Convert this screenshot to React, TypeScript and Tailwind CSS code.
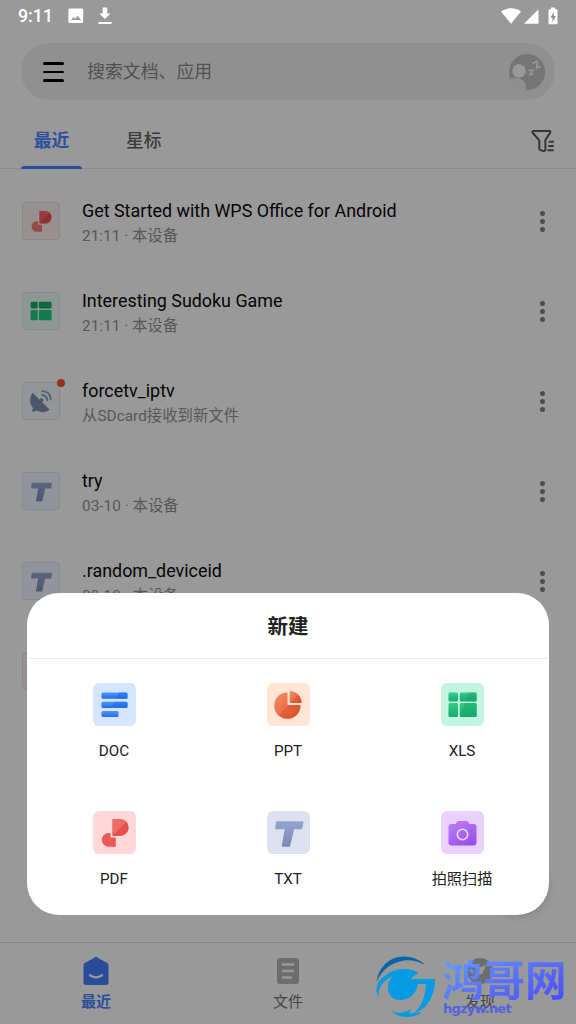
import type { ReactNode } from 'react';

type FileKind = 'pdf' | 'xls' | 'tv' | 'txt';

interface RecentFile {
  name: string;
  meta: string;
  kind: FileKind;
  unread?: boolean;
}

const files: RecentFile[] = [
  { name: 'Get Started with WPS Office for Android', meta: '21:11 · 本设备', kind: 'pdf' },
  { name: 'Interesting Sudoku Game', meta: '21:11 · 本设备', kind: 'xls' },
  { name: 'forcetv_iptv', meta: '从SDcard接收到新文件', kind: 'tv', unread: true },
  { name: 'try', meta: '03-10 · 本设备', kind: 'txt' },
  { name: '.random_deviceid', meta: '03-10 · 本设备', kind: 'txt' },
  { name: '', meta: '', kind: 'pdf' },
];

const tileStyles: Record<FileKind, string> = {
  pdf: 'bg-[#979090] border-[#8e8585]',
  xls: 'bg-[#8f9794] border-[#869089]',
  tv: 'bg-[#949596] border-[#888a8c]',
  txt: 'bg-[#91959b] border-[#858a94]',
};

function PdfMark({ from, to, light }: { from: string; to: string; light: string }) {
  return (
    <svg viewBox="0 0 43 43" className="size-full">
      <defs>
        <linearGradient id={`pdf${from}`} x1="0" y1="0" x2="1" y2="1">
          <stop offset="0.48" stopColor={from} />
          <stop offset="0.52" stopColor={to} />
        </linearGradient>
      </defs>
      <path d="M20 8h7.200a8.500 8.500 0 0 1 0 17H20a.8.8 0 0 1-.8-.8V8.800A.8.8 0 0 1 20 8z" fill={`url(#pdf${from})`} />
      <path d="M17.600 22v4.600h5.200v8.400a.8.8 0 0 1-.8.800h-6.200a6.900 6.900 0 0 1-6.900-6.900c0-4 3-7 6.900-7z" fill={light} />
    </svg>
  );
}

function XlsMark({ top, bottom }: { top: string; bottom: string }) {
  return (
    <svg viewBox="0 0 43 43" className="size-full">
      <rect x="7.500" y="9" width="9.500" height="9" rx="1.500" fill={top} />
      <rect x="18.700" y="9" width="17" height="9" rx="1.500" fill={top} />
      <rect x="7.500" y="20" width="9.500" height="14" rx="1.500" fill={bottom} />
      <rect x="18.700" y="20" width="17" height="14" rx="1.500" fill={bottom} />
    </svg>
  );
}

function TxtMark({ from, to }: { from: string; to: string }) {
  return (
    <svg viewBox="0 0 43 43" className="size-full">
      <defs>
        <linearGradient id={`txt${from}`} gradientUnits="userSpaceOnUse" x1="0" y1="10" x2="0" y2="36">
          <stop offset="0" stopColor={from} />
          <stop offset="1" stopColor={to} />
        </linearGradient>
      </defs>
      <polygon
        points="10,11.200 35.500,11.200 34.300,17.300 26.300,17.300 22.300,34.800 15.600,34.800 18.800,17.300 9,17.300"
        fill={`url(#txt${from})`}
        stroke={`url(#txt${from})`}
        strokeWidth="1.800"
        strokeLinejoin="round"
      />
    </svg>
  );
}

function DishMark() {
  return (
    <svg viewBox="4 4 31 31" className="size-full" fill="#4b566d">
      <path d="M11.500 11.500 28 28c-3.500 2.800-8.500 3-12.200 1l-5 .8.900-3.500C8.300 22 8.200 15.500 11.500 11.500z" />
      <circle cx="20" cy="18.700" r="1.800" />
      <g fill="none" stroke="#565f73" strokeWidth="1.800" strokeLinecap="round">
        <path d="M20.700 13.700c3 .3 4.500 2 4.800 5" />
        <path d="M20.700 10c5 .2 8 3.300 8.200 8.200" />
      </g>
    </svg>
  );
}

function FileMark({ kind }: { kind: FileKind }) {
  if (kind === 'pdf') return <PdfMark from="#963c3a" to="#902f2e" light="#984845" />;
  if (kind === 'xls') return <XlsMark top="#0b6941" bottom="#13794e" />;
  if (kind === 'tv') return <DishMark />;
  return <TxtMark from="#5b6580" to="#4c566d" />;
}

function StatusBar() {
  return (
    <div className="flex h-8 items-center pl-[18px] pr-[18px] text-white">
      <span className="w-[49px] text-[17.800px] leading-8 font-medium">9:11</span>
      <svg viewBox="0 0 16 16" className="ml-px h-4 w-4">
        <path
          fill="currentColor"
          fillRule="evenodd"
          d="M2 .5h11.600c1 0 1.600.700 1.600 1.600v11.300c0 1-.7 1.600-1.600 1.600H2c-1 0-1.600-.7-1.600-1.600V2.100C.4 1.200 1 .5 2 .5zM3 12h10L9.700 7.700l-2.500 3.200-1.700-2z"
        />
      </svg>
      <svg viewBox="0 0 14 18" className="ml-[14px] -mt-px h-[18px] w-[14px]" fill="currentColor">
        <path d="M4.600 0.500h4.600v6h3.300L6.900 12 1.300 6.500h3.300zM0.500 15h13v2h-13z" />
      </svg>
      <svg viewBox="0 0 20 16" className="ml-auto h-4 w-5" fill="currentColor">
        <path d="M10 15.700 0 3.500C5.500-.7 14.500-.7 20 3.500z" />
      </svg>
      <svg viewBox="0 0 15 15" className="ml-[3px] h-[15px] w-[15px]" fill="currentColor">
        <path d="M14.500.3v14.500H0z" />
      </svg>
      <svg viewBox="0 0 10 18" className="ml-[9px] -mt-px h-[18px] w-[10px]">
        <path fill="#fff" d="M3 0.500h4v1.800h1.600c.5 0 .9.400.9.900v13c0 .6-.4 1-.9 1H1.400c-.5 0-.9-.4-.9-1v-13c0-.5.4-.9.900-.9H3z" />
        <path fill="#8a8a8a" d="M6 4.800 2.500 10.400h2v4.500l3.300-6H5.700z" />
      </svg>
    </div>
  );
}

function SearchBar() {
  return (
    <div className="mx-[21px] mt-[11px] flex h-[57px] items-center rounded-full bg-[#909090] pl-[22px] pr-[10px]">
      <div className="mt-px flex w-[21px] flex-col gap-[6px]">
        <span className="h-[2.500px] rounded-full bg-black" />
        <span className="h-[2.500px] rounded-full bg-black" />
        <span className="h-[2.500px] rounded-full bg-black" />
      </div>
      <span className="ml-[23px] mt-[2px] text-[17.900px] text-[#505050]">搜索文档、应用</span>
      <svg viewBox="0 0 36 36" className="ml-auto size-9">
        <clipPath id="avatar">
          <circle cx="18" cy="18" r="18" />
        </clipPath>
        <g clipPath="url(#avatar)">
          <rect width="36" height="36" fill="#757575" />
          <circle cx="10" cy="17" r="6.800" fill="#999" />
          <path d="M0 24.500C8 22 17 25 17 33.500V36H0z" fill="#8f8f8f" />
          <path d="M19.500 16.500 24 16l-3.300 4.800 4.300-.5M23.500 9.500l5-2.200-1.200 6.500 4.200-1.300" fill="none" stroke="#999" strokeWidth="1.500" />
        </g>
      </svg>
    </div>
  );
}

function Tabs() {
  return (
    <div className="flex h-[69px] items-stretch border-b border-[#8b8b8b] pl-[21px] pr-[21px]">
      <div className="flex w-[61px] flex-col items-center justify-between">
        <span className="mt-[27px] text-[17.800px] leading-[28px] font-bold text-[#2b509b]">最近</span>
        <span className="-mb-px h-[3px] w-full rounded-t-[3px] bg-[#284d98]" />
      </div>
      <span className="ml-[44px] mt-[27px] text-[17.800px] leading-[28px] font-medium text-[#3b3b3b]">星标</span>
      <svg
        viewBox="0 0 24 24"
        className="ml-auto mt-[29px] size-6"
        fill="none"
        stroke="#353535"
        strokeWidth="2"
        strokeLinecap="round"
        strokeLinejoin="round"
      >
        <path d="M2.600 2h15.800c1 0 1.300.8.800 1.600l-4.800 7.400v9.700c0 1-.7 1.400-1.600 1.200l-3-.7c-1-.2-1.500-.8-1.500-1.700V11.300L1.800 4C1.200 3 1.600 2 2.600 2z" />
        <path d="M18.500 12.800h3.500M18 17h4M17.300 21.200h4.700" />
      </svg>
    </div>
  );
}

function FileRow({ file }: { file: RecentFile }) {
  return (
    <div className="flex h-[90px] shrink-0 items-center pl-[22px] pr-[31px]">
      <div className={`relative size-[38px] rounded-[4px] border p-[2px] ${tileStyles[file.kind]}`}>
        <FileMark kind={file.kind} />
        {file.unread && <span className="absolute -top-[4px] -right-[6px] size-2 rounded-full bg-[#98301f]" />}
      </div>
      {file.name && (
        <>
          <div className="ml-[22px] mt-[4px]">
            <p className="text-[17.900px] leading-[25px] text-[#050505]">{file.name}</p>
            <p className="text-[15.400px] leading-[26px] text-[#575757]">{file.meta}</p>
          </div>
          <div className="ml-auto flex flex-col gap-[3px]">
            <span className="size-[5px] rounded-full bg-[#4c4c4c]" />
            <span className="size-[5px] rounded-full bg-[#4c4c4c]" />
            <span className="size-[5px] rounded-full bg-[#4c4c4c]" />
          </div>
        </>
      )}
    </div>
  );
}

function BottomNav() {
  return (
    <div className="grid h-[82px] grid-cols-3 border-t border-[#858585] bg-[#999]">
      <div className="flex flex-col items-center pt-[14px]">
        <svg viewBox="0 0 26 28" className="h-7 w-[26px]">
          <path d="M11.800.4c.8-.5 1.600-.5 2.400 0l10 5.700c1 .6 1.300 1.200 1.300 2.200v17.200c0 1.700-.8 2.500-2.500 2.500H3C1.300 28 .5 27.200.5 25.500V8.300c0-1 .3-1.600 1.300-2.200z" fill="#274d98" />
          <path d="M7 18.300c3.500 2.500 8.500 2.500 12 0" fill="none" stroke="#999" strokeWidth="2.500" strokeLinecap="round" />
        </svg>
        <span className="mt-[5px] text-[15px] leading-6 font-bold text-[#2b509b]">最近</span>
      </div>
      <div className="flex flex-col items-center pt-[14px]">
        <svg viewBox="0 0 26 28" className="h-7 w-[26px]">
          <rect x="2" y="1" width="22" height="26" rx="3" fill="#6d6d6d" />
          <path d="M8 7.500h10M8 14h10M8 20.500h8" stroke="#999" strokeWidth="2.400" strokeLinecap="round" />
        </svg>
        <span className="mt-[5px] text-[15px] leading-6 text-[#444]">文件</span>
      </div>
      <div className="flex flex-col items-center pt-[14px]">
        <svg viewBox="0 0 26 28" className="h-7 w-[26px]">
          <circle cx="13" cy="14" r="13" fill="#6d6d6d" />
          <path d="m19 8-3.500 8.500L7 20l3.500-8.500z" fill="#999" />
        </svg>
        <span className="mt-[5px] text-[15px] leading-6 text-[#444]">发现</span>
      </div>
    </div>
  );
}

function DocMark() {
  return (
    <svg viewBox="0 0 43 43" className="size-full">
      <defs>
        <linearGradient id="doc" x1="0" y1="0" x2="0" y2="1">
          <stop offset="0" stopColor="#4d95f8" />
          <stop offset="1" stopColor="#216eeb" />
        </linearGradient>
      </defs>
      <g fill="url(#doc)">
        <rect x="8.500" y="9.500" width="26" height="6.200" rx="1.500" />
        <rect x="8.500" y="18.700" width="26" height="6.200" rx="1.500" />
        <rect x="8.500" y="27.900" width="17" height="6.200" rx="1.500" />
      </g>
      <path d="m26 9.500-2.500 6.200H33a1.500 1.500 0 0 0 1.500-1.500V11A1.500 1.500 0 0 0 33 9.500zM21.500 18.700 19 24.900h14a1.500 1.500 0 0 0 1.500-1.500v-3.200a1.500 1.500 0 0 0-1.500-1.500z" fill="#1f69e5" opacity=".55" />
    </svg>
  );
}

function PptMark() {
  return (
    <svg viewBox="0 0 43 43" className="size-full">
      <defs>
        <linearGradient id="ppt" x1="0" y1="0" x2="1" y2="1">
          <stop offset="0" stopColor="#f28b68" />
          <stop offset="0.5" stopColor="#eb704b" />
          <stop offset="0.520" stopColor="#e56039" />
          <stop offset="1" stopColor="#db4d28" />
        </linearGradient>
      </defs>
      <path d="M19.500 9.500c.7-.1 1 .3 1 1V22h12c.8 0 1.200.4 1.100 1.100A13.200 13.200 0 1 1 19.500 9.500z" fill="url(#ppt)" />
      <path d="M22.700 8.900c0-.7.3-1 1-.9 6 .8 10.200 5 11 11 .1.700-.3 1.100-1 1.100h-11z" fill="url(#ppt)" />
    </svg>
  );
}

function CameraMark() {
  return (
    <svg viewBox="0 0 43 43" className="size-full">
      <defs>
        <linearGradient id="cam" x1="0" y1="0" x2="0.600" y2="1">
          <stop offset="0" stopColor="#bd80f2" />
          <stop offset="0.550" stopColor="#a968ef" />
          <stop offset="1" stopColor="#9852e8" />
        </linearGradient>
      </defs>
      <path d="M10.500 13h4l1.500-2.300c.4-.5.9-.7 1.500-.7h8c.6 0 1.100.2 1.500.7l1.500 2.300h4c2 0 3 1 3 3v15.500c0 2-1 3-3 3h-22c-2 0-3-1-3-3V16c0-2 1-3 3-3z" fill="url(#cam)" />
      <circle cx="21.500" cy="23.500" r="5.200" fill="none" stroke="#ead5ff" strokeWidth="1.600" />
    </svg>
  );
}

function XlsCreateMark() {
  return (
    <svg viewBox="0 0 43 43" className="size-full">
      <defs>
        <linearGradient id="xls" x1="0" y1="0" x2="0" y2="1">
          <stop offset="0" stopColor="#3bc98d" />
          <stop offset="1" stopColor="#19a86c" />
        </linearGradient>
      </defs>
      <g fill="url(#xls)">
        <rect x="7.500" y="9.500" width="9.500" height="9" rx="1.500" />
        <rect x="18.700" y="9.500" width="17" height="9" rx="1.500" />
        <rect x="7.500" y="20" width="9.500" height="14" rx="1.500" />
        <rect x="18.700" y="20" width="17" height="14" rx="1.500" />
      </g>
      <path d="m28 9.500-3.500 9h9.700a1.500 1.500 0 0 0 1.500-1.500v-6a1.500 1.500 0 0 0-1.500-1.500zM24 20l-4.500 14h14.700a1.500 1.500 0 0 0 1.500-1.500v-11a1.500 1.500 0 0 0-1.500-1.500z" fill="#10a567" opacity=".45" />
    </svg>
  );
}

const createItems: { label: string; tile: string; icon: ReactNode }[] = [
  { label: 'DOC', tile: 'bg-[#d3e5ff]', icon: <DocMark /> },
  { label: 'PPT', tile: 'bg-[#ffe5d3]', icon: <PptMark /> },
  { label: 'XLS', tile: 'bg-[#c2f5df]', icon: <XlsCreateMark /> },
  { label: 'PDF', tile: 'bg-[#ffd7d7]', icon: <PdfMark from="#ee6b68" to="#e5504e" light="#e85855" /> },
  { label: 'TXT', tile: 'bg-[#dce1f0]', icon: <TxtMark from="#97a4cf" to="#7b89b0" /> },
  { label: '拍照扫描', tile: 'bg-[#e9d1ff]', icon: <CameraMark /> },
];

function CreateSheet() {
  return (
    <div className="absolute top-[593px] left-[27px] h-[322px] w-[522px] rounded-[32px] bg-white">
      <h2 className="h-[66px] border-b border-[#eee] text-center text-[20.500px] leading-[69px] font-bold text-[#222]">新建</h2>
      <div className="grid grid-cols-3">
        {createItems.map((item) => (
          <div key={item.label} className="flex h-[128px] flex-col items-center pt-[24px]">
            <div className={`size-[43px] rounded-[6px] ${item.tile}`}>{item.icon}</div>
            <span className="mt-[13px] text-[15.200px] leading-6 text-[#222]">{item.label}</span>
          </div>
        ))}
      </div>
    </div>
  );
}

function Watermark() {
  return (
    <div className="absolute top-[952px] left-[374px] flex h-[72px] w-[200px]">
      <svg viewBox="0 0 62 68" className="mt-[2px] h-[68px] w-[62px] shrink-0">
        <path d="M2.500 28C5 12 16 3 29 2.500c9 0 17 3 22 8.500C44 7 37 5.500 29 6.700 18 8.500 8 15 2.500 28z" fill="#0865aa" />
        <path d="M4.500 43C0 36 3 27 11 21.500c9-7 24-9 34-2.500-3 1-6 3-8 6h24c0 8-1.500 14-4 19-4 8-9 13-17 15 6-5 11-13 12-29h-8c-2 10-8 15.500-17 16-9 0-14-6-13-15 .4-3 2-6 5-9C9 26 4 34 4.500 43z" fill="#079be4" />
        <path d="M17 57c7 2.500 13 2.500 20-2l-1.500 4.500 12-1.500C41 64.500 26 65.500 17 57z" fill="#079be4" />
      </svg>
      <div className="ml-[6px] w-[128px]">
        <p className="bg-linear-to-br from-[#65a4ff] via-[#586ffb] to-[#493dff] bg-clip-text pt-[2px] text-[41.500px] leading-[56px] font-bold whitespace-nowrap text-transparent">
          鸿哥网
        </p>
        <p className="-mt-[9px] ml-px font-['DejaVu_Sans'] text-[13px] leading-4 font-bold tracking-[-0.800px] text-[#5362df]">hgzyw.net</p>
      </div>
    </div>
  );
}

export default function App() {
  return (
    <div className="relative flex h-[1024px] w-[576px] flex-col overflow-hidden bg-[#999] font-[Roboto,'Noto_Sans_CJK_SC',sans-serif]">
      <StatusBar />
      <SearchBar />
      <Tabs />
      <main className="flex min-h-0 flex-1 flex-col overflow-hidden pt-[7px]">
        {files.map((file, i) => (
          <FileRow key={i} file={file} />
        ))}
      </main>
      <BottomNav />
      {/* Floating button glow behind the sheet */}
      <div className="absolute top-[857px] left-[491px] size-[56px] rounded-full bg-[#777b85] shadow-[0_2px_10px_#777b85]" />
      <CreateSheet />
      <Watermark />
    </div>
  );
}
